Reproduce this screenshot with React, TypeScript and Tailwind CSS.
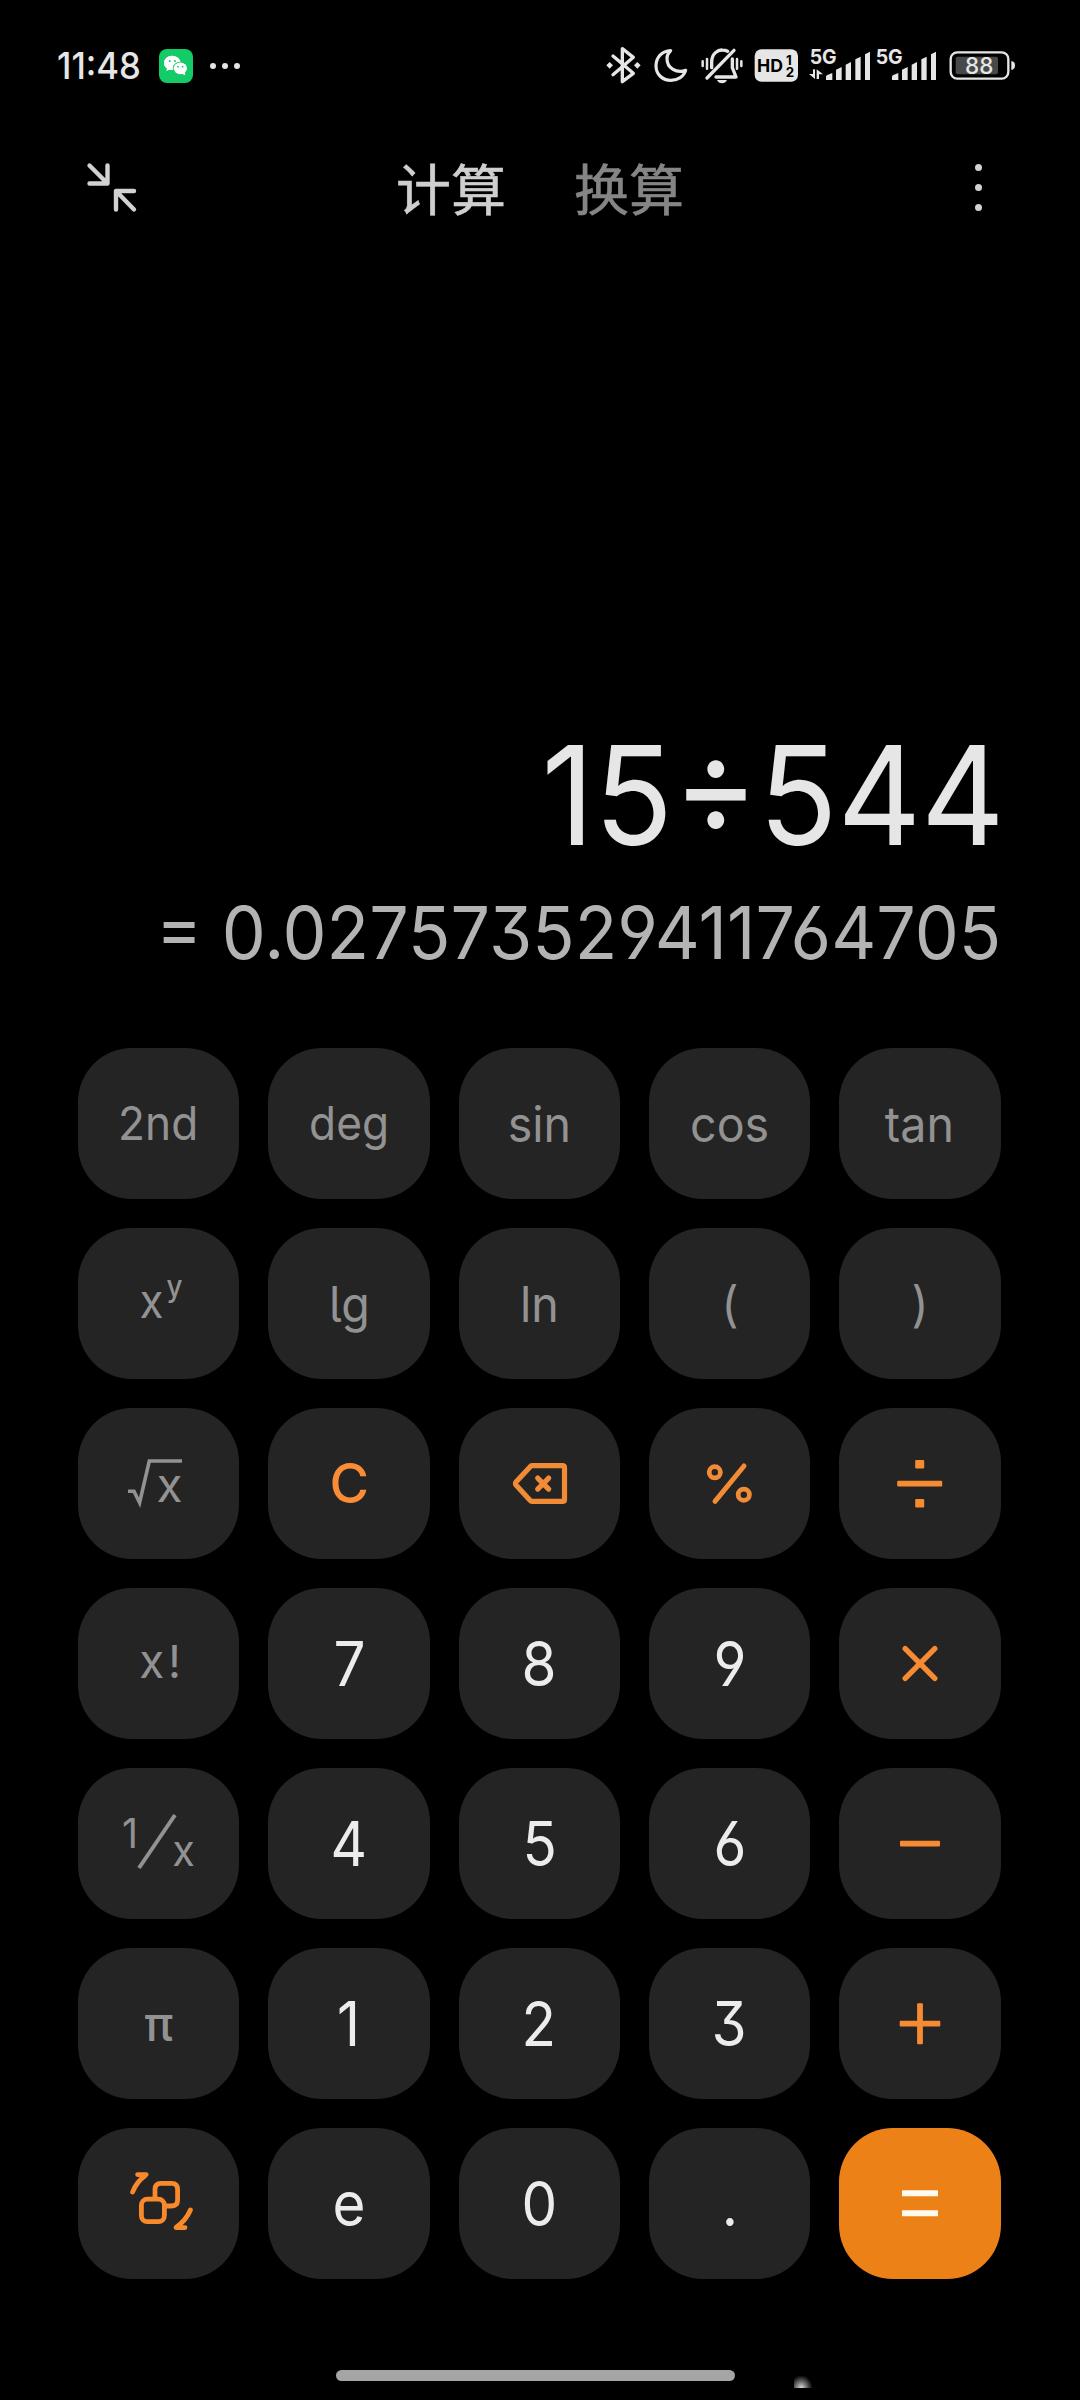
import { ReactNode } from "react";

type KeyItem = {
  id: string;
  label?: string;
  kind: "fn" | "fnSmall" | "num" | "clear" | "pi" | "icon" | "equal";
  icon?: ReactNode;
};

const Draw = ({ children }: { children: ReactNode }) => (
  <svg viewBox="0 0 161 151" className="h-[151px] w-[161px] shrink-0" fill="none">
    {children}
  </svg>
);

const PowerIcon = () => (
  <Draw>
    <g fill="#929292">
      <text x="61.5" y="89.6" fontSize="47" textLength="24" lengthAdjust="spacingAndGlyphs">x</text>
      <text x="88.5" y="69" fontSize="30" fontWeight="500" textLength="16" lengthAdjust="spacingAndGlyphs">y</text>
    </g>
  </Draw>
);

const RootIcon = () => (
  <Draw>
    <path d="M50 83.3H56L61.6 94.7L71.3 53H104" stroke="#929292" strokeWidth="3.6" />
    <text x="78.5" y="93.7" fontSize="47" fill="#929292" textLength="26" lengthAdjust="spacingAndGlyphs">x</text>
  </Draw>
);

const FactorialIcon = () => (
  <Draw>
    <g fill="#929292">
      <text x="61.2" y="89.7" fontSize="47" textLength="25" lengthAdjust="spacingAndGlyphs">x</text>
      <text x="90" y="89.7" fontSize="45">!</text>
    </g>
  </Draw>
);

const InverseIcon = () => (
  <Draw>
    <g fill="#929292">
      <text x="44" y="80" fontSize="41" textLength="16" lengthAdjust="spacingAndGlyphs">1</text>
      <text x="94.2" y="98" fontSize="43" textLength="22.6" lengthAdjust="spacingAndGlyphs">x</text>
    </g>
    <path d="M61 100L97 47" stroke="#929292" strokeWidth="4" />
  </Draw>
);

const BackspaceIcon = () => (
  <Draw>
    <g stroke="#f18b36" strokeWidth="5.2" strokeLinecap="round" strokeLinejoin="round">
      <path d="M73 57.7H103.5Q105.5 57.7 105.5 59.7V91.4Q105.5 93.4 103.5 93.4H73Q72 93.4 71.2 92.4L57 77Q56 75.5 57 74L71.2 58.7Q72 57.7 73 57.7Z" />
      <path d="M78.7 70.1L89.7 81.1M89.7 70.1L78.7 81.1" />
    </g>
  </Draw>
);

const PercentIcon = () => (
  <Draw>
    <g stroke="#f18b36" strokeWidth="4.8">
      <circle cx="65.8" cy="64.3" r="5.6" />
      <circle cx="94.8" cy="86.7" r="5.6" />
      <path d="M66 93.3L95 58" strokeWidth="5" strokeLinecap="round" />
    </g>
  </Draw>
);

const DivideIcon = () => (
  <Draw>
    <g fill="#f78b32">
      <rect x="58.2" y="72.8" width="45" height="5.8" rx="1" />
      <rect x="76.2" y="52" width="9" height="8.4" rx="1" />
      <rect x="76.2" y="91" width="9" height="8.4" rx="1" />
    </g>
  </Draw>
);

const TimesIcon = () => (
  <Draw>
    <path d="M66.2 60.6L95.8 90.4M95.8 60.6L66.2 90.4" stroke="#f78b32" strokeWidth="5.4" strokeLinecap="round" />
  </Draw>
);

const MinusIcon = () => (
  <Draw>
    <rect x="61" y="72.8" width="40" height="5.8" rx="1" fill="#f78b32" />
  </Draw>
);

const PlusIcon = () => (
  <Draw>
    <g fill="#f78b32">
      <rect x="60.7" y="72.8" width="40.6" height="5.8" rx="1" />
      <rect x="78.1" y="55.2" width="5.8" height="41" rx="1" />
    </g>
  </Draw>
);

const EqualIcon = () => (
  <Draw>
    <g fill="#fffaf0">
      <rect x="63" y="62.3" width="36" height="6" rx="0.5" />
      <rect x="63" y="82.3" width="36" height="6" rx="0.5" />
    </g>
  </Draw>
);

const SwitchIcon = () => (
  <Draw>
    <g stroke="#f98a2c" strokeWidth="4.8" strokeLinecap="round" strokeLinejoin="round">
      <rect x="63.4" y="71.1" width="23" height="22.6" rx="6" />
      <path d="M77 69.5V61.5Q77 55.4 83 55.4H93.6Q99.6 55.4 99.6 61.5V72Q99.6 78 93.6 78H88.5" />
      <path d="M54.6 64Q58.5 54 67 47.8M59.6 46.6H68.2" />
      <path d="M112.4 82Q108 92.4 98.5 99M98 99.6H107" />
    </g>
  </Draw>
);

const keys: KeyItem[] = [
  { id: "2nd", label: "2nd", kind: "fnSmall" },
  { id: "deg", label: "deg", kind: "fnSmall" },
  { id: "sin", label: "sin", kind: "fn" },
  { id: "cos", label: "cos", kind: "fn" },
  { id: "tan", label: "tan", kind: "fn" },
  { id: "pow", kind: "icon", icon: <PowerIcon /> },
  { id: "lg", label: "lg", kind: "fn" },
  { id: "ln", label: "ln", kind: "fn" },
  { id: "open", label: "(", kind: "fn" },
  { id: "close", label: ")", kind: "fn" },
  { id: "root", kind: "icon", icon: <RootIcon /> },
  { id: "clear", label: "C", kind: "clear" },
  { id: "back", kind: "icon", icon: <BackspaceIcon /> },
  { id: "percent", kind: "icon", icon: <PercentIcon /> },
  { id: "divide", kind: "icon", icon: <DivideIcon /> },
  { id: "fact", kind: "icon", icon: <FactorialIcon /> },
  { id: "7", label: "7", kind: "num" },
  { id: "8", label: "8", kind: "num" },
  { id: "9", label: "9", kind: "num" },
  { id: "times", kind: "icon", icon: <TimesIcon /> },
  { id: "inv", kind: "icon", icon: <InverseIcon /> },
  { id: "4", label: "4", kind: "num" },
  { id: "5", label: "5", kind: "num" },
  { id: "6", label: "6", kind: "num" },
  { id: "minus", kind: "icon", icon: <MinusIcon /> },
  { id: "pi", label: "π", kind: "pi" },
  { id: "1", label: "1", kind: "num" },
  { id: "2", label: "2", kind: "num" },
  { id: "3", label: "3", kind: "num" },
  { id: "plus", kind: "icon", icon: <PlusIcon /> },
  { id: "switch", kind: "icon", icon: <SwitchIcon /> },
  { id: "e", label: "e", kind: "num" },
  { id: "0", label: "0", kind: "num" },
  { id: "dot", label: ".", kind: "num" },
  { id: "equal", kind: "equal", icon: <EqualIcon /> },
];

const labelStyle = {
  fn: "text-[49px] text-[#929292] pt-[2px] scale-x-[0.95]",
  fnSmall: "text-[46.5px] text-[#929292] scale-x-[0.95]",
  num: "text-[61.5px] text-[#ececec] scale-x-[0.92]",
  clear: "text-[55px] text-[#f98c34] font-medium scale-x-[0.98]",
  pi: "text-[47px] text-[#929292] font-medium",
  icon: "",
  equal: "",
};

const Key = ({ item }: { item: KeyItem }) => (
  <button
    className={`flex h-full w-full items-center justify-center overflow-hidden rounded-[54px] ${
      item.kind === "equal" ? "bg-[#ec8217]" : "bg-[#242424]"
    }`}
  >
    {item.icon ? (
      item.icon
    ) : (
      <span
        className={`leading-none ${labelStyle[item.kind]} ${
          item.id === "lg" ? "[font-feature-settings:'cv05']" : "[font-feature-settings:'cv09','cv03','cv04']"
        }`}
      >
        {item.label}
      </span>
    )}
  </button>
);

const Signal = ({ x, data }: { x: number; data?: boolean }) => (
  <g fill="#e6e6e6">
    <text x={x - 3} y="103" fontSize="61" fontWeight="700" textLength="81" lengthAdjust="spacingAndGlyphs">5G</text>
    <path d={`M${x + 46} 150V141Q${x + 46} 137 ${x + 50} 135L${x + 65} 129V150Z`} />
    <path d={`M${x + 76} 150V119L${x + 93} 111V150Z`} />
    <path d={`M${x + 105} 150V104L${x + 121} 96V150Z`} />
    <path d={`M${x + 134} 150V88L${x + 150} 80V150Z`} />
    <path d={`M${x + 163} 150V73L${x + 178} 65V150Z`} />
    {data && <path d="M669 118H675V147L657 132H669ZM680 147V118L699 133H687V147Z" />}
  </g>
);

const StatusBar = () => (
  <div className="flex h-[131px] items-start pl-[57px] pt-[45px] text-[#e6e6e6]">
    <div className="flex h-10 items-center pt-[2px]">
      <span className="w-[102px] origin-left scale-x-[0.95] whitespace-nowrap text-[36.5px] font-medium leading-none">11:48</span>
      <svg viewBox="357 57 102 102" className="-mt-[1px] h-[34px] w-[34px]">
        <rect x="357" y="57" width="102" height="102" rx="24" fill="#13cb67" />
        <path d="M397 77C383 77 372 87 372 99C372 106 375 111 381 115L379 123L388 119C391 120 395 120 399 120Z" fill="#fff" />
        <ellipse cx="397" cy="98.500" rx="25" ry="21.500" fill="#fff" />
        <ellipse cx="421" cy="115" rx="22.500" ry="20" fill="#13cb67" />
        <ellipse cx="421" cy="115" rx="20" ry="17.500" fill="#fff" />
        <path d="M425 131L436 136L434 125Z" fill="#fff" />
        <g fill="#13cb67">
          <circle cx="389" cy="93" r="3" />
          <circle cx="405" cy="93" r="3" />
          <circle cx="414" cy="110" r="2.500" />
          <circle cx="428" cy="110" r="2.500" />
        </g>
      </svg>
      <div className="ml-[17px] flex gap-[6px]">
        <i className="h-[6px] w-[6px] rounded-full bg-[#e6e6e6]" />
        <i className="h-[6px] w-[6px] rounded-full bg-[#e6e6e6]" />
        <i className="h-[6px] w-[6px] rounded-full bg-[#e6e6e6]" />
      </div>
    </div>

    <div className="ml-auto flex pr-[64px]">
      {/* bluetooth */}
      <svg viewBox="48 45 105 120" className="h-10 w-[35px]" fill="none">
        <path d="M69 78L130 130L97 155V56L130 82L69 134" stroke="#e6e6e6" strokeWidth="10" strokeLinecap="round" strokeLinejoin="round" />
        <path d="M59 96L69 106L59 116L49 106ZM142 96L152 106L142 116L132 106Z" fill="#e6e6e6" />
      </svg>
      {/* do not disturb */}
      <svg viewBox="192 45 102 120" className="ml-[13px] h-10 w-[34px]" fill="none">
        <path d="M242 62C216 63 198 82 198 107C198 133 217 151 243 151C264 151 281 140 287 121C261 131 230 116 231 84C231 74 236 68 242 62Z" stroke="#e6e6e6" strokeWidth="9.500" strokeLinejoin="round" />
      </svg>
      {/* silent */}
      <svg viewBox="333 45 129 120" className="ml-[13px] h-10 w-[43px]" fill="none" stroke="#e6e6e6" strokeLinecap="round">
        <path d="M351 144L432 61" strokeWidth="10" />
        <path d="M365 113V96C365 70 385 59 397 60C404 60 409 61 413 64M427 87V113L438 141H378" strokeWidth="10" strokeLinejoin="round" />
        <path d="M338 94V108M351 87V116M441 87V116M454 94V108" strokeWidth="7.500" />
        <path d="M381 150H411Q406 160 396 160Q386 160 381 150Z" fill="#e6e6e6" stroke="none" />
      </svg>
      <svg viewBox="492 45 135 120" className="ml-[10px] h-10 w-[45px]">
        <rect x="494" y="58" width="130" height="97" rx="20" fill="#e6e6e6" />
        <text fill="#000" fontWeight="700">
          <tspan x="501" y="126" fontSize="53">HD</tspan>
          <tspan x="588" y="104" fontSize="40">1</tspan>
          <tspan x="587" y="141" fontSize="40">2</tspan>
        </text>
      </svg>
      <svg viewBox="657 45 186 120" className="ml-[10px] h-10 w-[62px]">
        <Signal x={662} data />
      </svg>
      <svg viewBox="858 45 183 120" className="ml-[5px] h-10 w-[61px] overflow-visible">
        <Signal x={860} />
      </svg>
      <svg viewBox="1077 45 201 120" className="ml-[12px] h-10 w-[67px]" fill="none">
        <rect x="1082" y="67" width="173" height="79" rx="20" stroke="#e6e6e6" strokeWidth="7" />
        <rect x="1097" y="80" width="127" height="53" rx="6" fill="#484848" />
        <text x="1125" y="132" fontSize="67" fontWeight="500" fill="#e6e6e6" textLength="85" lengthAdjust="spacingAndGlyphs">88</text>
        <path d="M1264 93Q1275 94 1275 106Q1275 119 1264 120Z" fill="#e6e6e6" />
      </svg>
    </div>
  </div>
);

const Header = () => (
  <div className="flex h-28 items-center pl-[86px] pr-[98px]">
    <svg viewBox="0 0 52 52" className="h-[52px] w-[52px]" fill="none" stroke="#d2d2d2" strokeWidth="4.400" strokeLinecap="round" strokeLinejoin="round">
      <path d="M3.500 4.500L21.500 22.500M21.500 4.500V22.500H3.500" />
      <path d="M48 48.500L30 30M48 30H30V48.500" />
    </svg>
    <div className="ml-[258px] flex gap-[68px] whitespace-nowrap pb-[2px] text-[55px] leading-none font-['Noto_Sans_CJK_SC',sans-serif]">
      <span className="w-[110px] text-[#cfcfcf] [-webkit-text-stroke:0.6px]">计算</span>
      <span className="w-[110px] text-[#858585] [-webkit-text-stroke:0.6px]">换算</span>
    </div>
    <div className="ml-auto flex flex-col gap-[13px]">
      <i className="h-[7px] w-[7px] rounded-full bg-[#d2d2d2]" />
      <i className="h-[7px] w-[7px] rounded-full bg-[#d2d2d2]" />
      <i className="h-[7px] w-[7px] rounded-full bg-[#d2d2d2]" />
    </div>
  </div>
);

const App = () => {
  return (
    <div className="flex h-[2400px] w-[1080px] flex-col overflow-hidden bg-black font-[Inter,sans-serif]">
      <StatusBar />
      <Header />

      {/* display */}
      <div className="flex h-[805px] flex-col items-end justify-end gap-8 whitespace-nowrap pb-[79px] pr-[79px] leading-none [font-feature-settings:'cv09','cv03','cv04']">
        <div className="-mr-[4px] origin-right scale-x-[0.942] text-[137.5px] leading-[138px] text-[#e6e6e6]">15÷544</div>
        <div className="origin-right scale-x-[0.957] text-[73px] leading-[73px] text-[#b3b3b3]">= 0.027573529411764705</div>
      </div>

      {/* keypad */}
      <div className="ml-[78px] grid h-[1231px] w-[922.5px] shrink-0 grid-cols-5 grid-rows-7 gap-[29px]">
        {keys.map((item) => (
          <Key key={item.id} item={item} />
        ))}
      </div>

      <div className="mt-[91px] flex items-start pl-[336px]">
        <div className="h-[11px] w-[399px] rounded-full bg-[#a5a5a5]" />
        <div className="ml-[59px] mt-[6px] h-[12px] w-[18px] bg-[radial-gradient(ellipse_at_40%_100%,#dddddd,#555555_45%,transparent_75%)]" />
      </div>
    </div>
  );
};

export default App;
